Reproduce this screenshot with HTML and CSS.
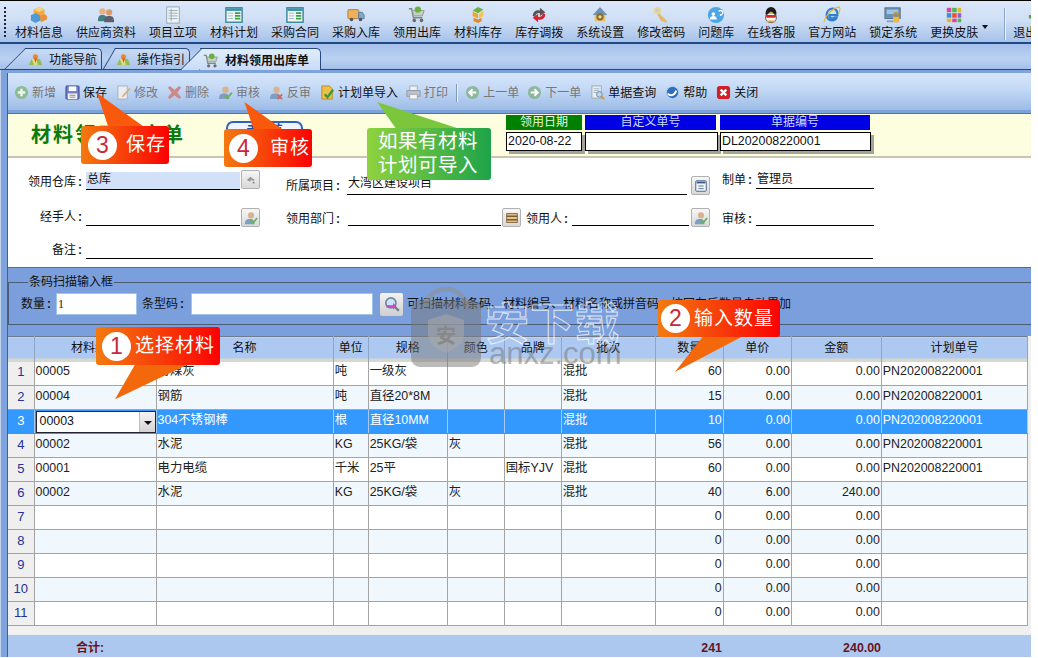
FILE: index.html
```html
<!DOCTYPE html>
<html lang="zh-CN">
<head>
<meta charset="utf-8">
<title>材料领用出库单</title>
<link rel="stylesheet" href="styles.css">
</head>
<body>
<svg class="defs" width="0" height="0" aria-hidden="true">
  <defs>
    <symbol id="i-box" viewBox="0 0 20 20"><path d="M10 1l6 3v5l-6 3-6-3V4z" fill="#f3a63c"/><path d="M10 1l6 3-6 3-6-3z" fill="#f9cf7f"/><path d="M1 10l6-2 5 3v5l-6 3-5-3z" fill="#4f9bd6"/><path d="M11 11l5-2 3 2v4l-7 3z" fill="#e9913a"/></symbol>
    <symbol id="i-people" viewBox="0 0 20 20"><circle cx="6" cy="6" r="3.5" fill="#e8b184"/><path d="M1 17c0-6 2-7 5-7s5 1 5 7z" fill="#3f7f86"/><circle cx="13.500" cy="7" r="3.500" fill="#d99a6c"/><path d="M8 18c0-6 2-7 5.500-7S19 12 19 18z" fill="#5d5d6e"/></symbol>
    <symbol id="i-list" viewBox="0 0 20 20"><rect x="3" y="1" width="14" height="18" fill="#eef2f4" stroke="#8da2ad"/><path d="M5 5h10M5 8h10M5 11h10M5 14h10M8 3v14" stroke="#93a8b3"/></symbol>
    <symbol id="i-plan" viewBox="0 0 20 20"><rect x="1" y="2" width="18" height="16" fill="#f3f8f6" stroke="#2f7f95" stroke-width="1.500"/><rect x="1.500" y="2.500" width="17" height="3" fill="#3d93aa"/><path d="M11 8h6M11 11h6M11 14h6" stroke="#3aa04a" stroke-width="2"/><path d="M3 8h6M3 11h6M3 14h6" stroke="#9fb5bd"/></symbol>
    <symbol id="i-truck" viewBox="0 0 20 20"><rect x="1" y="4" width="12" height="10" rx="1" fill="#eeb05d" stroke="#b47a33"/><path d="M13 7h4l2 3v4h-6z" fill="#7fa9c9" stroke="#557f9f"/><circle cx="5" cy="15" r="2" fill="#555"/><circle cx="15" cy="15" r="2" fill="#555"/></symbol>
    <symbol id="i-cart" viewBox="0 0 20 20"><path d="M1 3h3l2 10h10" fill="none" stroke="#7b8a80" stroke-width="1.500"/><path d="M5 5h13l-2 6H6z" fill="#c6cfc4" stroke="#8b9a8e"/><circle cx="11" cy="4" r="3.500" fill="#6cae3f"/><circle cx="7" cy="16" r="2" fill="#6b6b6b"/><circle cx="15" cy="16" r="2" fill="#6b6b6b"/></symbol>
    <symbol id="i-cubes" viewBox="0 0 20 20"><path d="M10 1l6 3-6 4-6-3z" fill="#69b342"/><path d="M4 6l6 3v5l-6-3z" fill="#f0a52f"/><path d="M16 5v6l-5 3V9z" fill="#f6c64b"/><path d="M5 13l5 2 4-2v4l-4 2-5-2z" fill="#e58a2c"/></symbol>
    <symbol id="i-swap" viewBox="0 0 20 20"><path d="M3 11a6 6 0 0 1 8-6V2l6 5-6 4V8a4 4 0 0 0-5 4z" fill="#555"/><path d="M17 9a6 6 0 0 1-8 6v3l-6-5 6-4v3a4 4 0 0 0 5-4z" fill="#d8232a"/></symbol>
    <symbol id="i-gear" viewBox="0 0 20 20"><path d="M10 1l8 9H2z" fill="#6f8fb3"/><path d="M4 10h12v7H4z" fill="#e3c26c"/><circle cx="10" cy="12" r="4" fill="#8c6a28"/><circle cx="10" cy="12" r="1.800" fill="#f2dc9b"/></symbol>
    <symbol id="i-key" viewBox="0 0 20 20"><circle cx="6" cy="5" r="4" fill="#eed18c"/><circle cx="6" cy="5" r="1.500" fill="#b5cce9"/><path d="M8 8l9 9-2 2-2-2-1 1-2-2-1-1-3-5z" fill="#e2bb68"/></symbol>
    <symbol id="i-q" viewBox="0 0 20 20"><circle cx="10" cy="10" r="9" fill="#4aa6e6"/><circle cx="7" cy="9" r="2" fill="#fff"/><path d="M3 15c0-3 2-4 4-4s4 1 4 4z" fill="#fff"/><path d="M13 6a2.500 2.500 0 1 1 2 4v1" fill="none" stroke="#fff" stroke-width="1.500"/></symbol>
    <symbol id="i-qq" viewBox="0 0 20 20"><ellipse cx="10" cy="8" rx="6" ry="7" fill="#1b1b1b"/><ellipse cx="10" cy="13" rx="6" ry="5.500" fill="#fff" stroke="#222" stroke-width=".8"/><path d="M4 10h12l-1 3H5z" fill="#d9281f"/><path d="M7 8l3-2 3 2-3 1z" fill="#f0b429"/><path d="M4 18l3-2h6l3 2z" fill="#f0a020"/></symbol>
    <symbol id="i-ie" viewBox="0 0 20 20"><path d="M15 13c-1 2-3 3-5 3-4 0-6-3-6-6 0-4 3-7 7-7 3 0 6 3 5 7H7c0 2 1 4 3 4 1 0 2-.5 3-1z" fill="none" stroke="#2f80cf" stroke-width="2.500"/><path d="M1 18C2 12 9 3 18 1c2 3 0 6-1 8" fill="none" stroke="#e5b52f" stroke-width="1.200"/></symbol>
    <symbol id="i-lock" viewBox="0 0 20 20"><rect x="1" y="2" width="17" height="12" fill="#6b8fb5" stroke="#516f90"/><rect x="3" y="4" width="13" height="5" fill="#9fc4e6"/><rect x="3" y="16" width="13" height="2" fill="#8d9fb0"/><path d="M11 12v-2a2.500 2.500 0 0 1 5 0v2" fill="none" stroke="#c98f22" stroke-width="1.500"/><rect x="10" y="12" width="7" height="6" fill="#f0b93a"/></symbol>
    <symbol id="i-skin" viewBox="0 0 20 20"><path d="M2 2h5v5H2z" fill="#d646a8"/><path d="M8 2h5v5H8z" fill="#50b848"/><path d="M14 2h4v5h-4z" fill="#e5b52f"/><path d="M2 8h5v5H2z" fill="#3d8fd6"/><path d="M8 8h5v5H8z" fill="#e2542f"/><path d="M14 8h4v5h-4z" fill="#9a58c8"/><path d="M2 14h5v4H2z" fill="#e5b52f"/><path d="M8 14h5v4H8z" fill="#d646a8"/><path d="M14 14h4v4h-4z" fill="#50b848"/></symbol>
    <symbol id="i-exit" viewBox="0 0 20 20"><rect x="9" y="1" width="9" height="18" fill="#5c5c46"/><path d="M1 10h7V7l5 5-5 5v-3H1z" fill="#56a33b"/></symbol>
    <symbol id="i-map" viewBox="0 0 20 20"><path d="M1 16l4-8h11l3 8z" fill="#8fbf57"/><path d="M5 8l3 8h5L11 8z" fill="#e8d77f"/><circle cx="10" cy="5" r="3.500" fill="#e58a2c"/><path d="M8 7l2 6 2-6z" fill="#d35f1e"/></symbol>

    <symbol id="s-plus" viewBox="0 0 16 16"><circle cx="8" cy="8" r="7" fill="#8dbb94"/><path d="M4 8h8M8 4v8" stroke="#eef6ee" stroke-width="2.500"/></symbol>
    <symbol id="s-save" viewBox="0 0 16 16"><rect x="1" y="1" width="14" height="14" rx="1" fill="#6e7fc8" stroke="#36478f"/><rect x="4" y="1.500" width="8" height="5" fill="#fff"/><rect x="3" y="9" width="10" height="6" fill="#f2f2f2"/><path d="M5 11h6M5 13h6" stroke="#888"/></symbol>
    <symbol id="s-edit" viewBox="0 0 16 16"><rect x="2" y="1" width="10" height="14" fill="#e9edf3" stroke="#a8afb8"/><path d="M7 11l7-8 1.500 1.500L8 12.500l-2 .5z" fill="#d5b27a"/></symbol>
    <symbol id="s-del" viewBox="0 0 16 16"><path d="M3 1l5 4 5-4 2 2-4 5 4 5-2 2-5-4-5 4-2-2 4-5-4-5z" fill="#c98a8a"/></symbol>
    <symbol id="s-audit" viewBox="0 0 16 16"><circle cx="8" cy="5" r="3.500" fill="#d8b392"/><path d="M1 15c0-5 2-6 6-6s5 2 5 6z" fill="#7d9fc5"/><path d="M7 11l3 3 5-6" fill="none" stroke="#6cb15c" stroke-width="2"/></symbol>
    <symbol id="s-unaudit" viewBox="0 0 16 16"><circle cx="8" cy="5" r="3.500" fill="#d8b392"/><path d="M1 15c0-5 2-6 6-6s5 2 5 6z" fill="#7d9fc5"/><path d="M9 10l5 5M14 10l-5 5" stroke="#c96a6a" stroke-width="2"/></symbol>
    <symbol id="s-import" viewBox="0 0 16 16"><path d="M2 1h8l3 3v11H2z" fill="#eec14c" stroke="#b48a22"/><path d="M5 10l3 3 6-8" fill="none" stroke="#3c9a35" stroke-width="2.500"/></symbol>
    <symbol id="s-print" viewBox="0 0 16 16"><rect x="4" y="1" width="8" height="5" fill="#eef0f3" stroke="#a5abb3"/><rect x="1" y="6" width="14" height="6" fill="#bcc3cc" stroke="#8f98a3"/><rect x="4" y="10" width="8" height="5" fill="#f4f5f7" stroke="#a5abb3"/></symbol>
    <symbol id="s-prev" viewBox="0 0 16 16"><circle cx="8" cy="8" r="7" fill="#8db8a0"/><path d="M12 8H6M8 4.500L4.500 8 8 11.500" fill="none" stroke="#fff" stroke-width="2"/></symbol>
    <symbol id="s-next" viewBox="0 0 16 16"><circle cx="8" cy="8" r="7" fill="#8db8a0"/><path d="M4 8h6M8 4.500L11.500 8 8 11.500" fill="none" stroke="#fff" stroke-width="2"/></symbol>
    <symbol id="s-query" viewBox="0 0 16 16"><rect x="2" y="1" width="10" height="13" fill="#e8edf2" stroke="#9aa8b5"/><path d="M4 4h6M4 6h6M4 8h4" stroke="#a9b7c4"/><circle cx="10" cy="10" r="3" fill="#bcd6ee" stroke="#6d89a3"/><path d="M12 12l3 3" stroke="#d3983a" stroke-width="2"/></symbol>
    <symbol id="s-help" viewBox="0 0 16 16"><circle cx="8" cy="8" r="6.500" fill="#2f6fc0" stroke="#b8cfe8"/><path d="M3 9c2 3 7 3 9-3" fill="none" stroke="#fff" stroke-width="2"/></symbol>
    <symbol id="s-close" viewBox="0 0 16 16"><rect x="1" y="1" width="14" height="14" rx="3" fill="#cf2027"/><path d="M5 5l6 6M11 5l-6 6" stroke="#fff" stroke-width="2.500"/></symbol>
    <symbol id="s-find" viewBox="0 0 16 16"><circle cx="7" cy="7" r="4.500" fill="#cfe3f5" stroke="#6a8aa8" stroke-width="1.500"/><path d="M10 10l4 4" stroke="#6a7a88" stroke-width="2"/><path d="M3 9h6v-2l3 3-3 3v-2H3z" fill="#c24bc4"/></symbol>
    <symbol id="s-back" viewBox="0 0 16 16"><path d="M3 8l5-4 1 2 3 1-1 2-3-1-1 2z" fill="#9a9a9a"/><rect x="10" y="10" width="2" height="2" fill="#8a8a8a"/></symbol>
    <symbol id="s-doc" viewBox="0 0 16 16"><rect x="2" y="2" width="12" height="12" rx="1" fill="#f2f6fa" stroke="#35597c"/><rect x="3" y="3" width="10" height="2" fill="#35597c"/><path d="M5 8h6M5 11h6" stroke="#47688a"/></symbol>
    <symbol id="s-abacus" viewBox="0 0 16 16"><rect x="2" y="3" width="12" height="10" fill="#e4c596" stroke="#7f5a2a"/><path d="M2 6h12M2 10h12" stroke="#7f5a2a" stroke-width="1.500"/></symbol>
  </defs>
</svg>

<div class="app">
  <nav class="topbar">
    <span class="grip"></span>
    <a class="ti"><svg class="ti-ic"><use href="#i-box"/></svg><span>材料信息</span></a>
    <a class="ti"><svg class="ti-ic"><use href="#i-people"/></svg><span>供应商资料</span></a>
    <a class="ti"><svg class="ti-ic"><use href="#i-list"/></svg><span>项目立项</span></a>
    <a class="ti"><svg class="ti-ic"><use href="#i-plan"/></svg><span>材料计划</span></a>
    <a class="ti"><svg class="ti-ic"><use href="#i-plan"/></svg><span>采购合同</span></a>
    <a class="ti"><svg class="ti-ic"><use href="#i-truck"/></svg><span>采购入库</span></a>
    <a class="ti"><svg class="ti-ic"><use href="#i-cart"/></svg><span>领用出库</span></a>
    <a class="ti"><svg class="ti-ic"><use href="#i-cubes"/></svg><span>材料库存</span></a>
    <a class="ti"><svg class="ti-ic"><use href="#i-swap"/></svg><span>库存调拨</span></a>
    <a class="ti"><svg class="ti-ic"><use href="#i-gear"/></svg><span>系统设置</span></a>
    <a class="ti"><svg class="ti-ic"><use href="#i-key"/></svg><span>修改密码</span></a>
    <a class="ti"><svg class="ti-ic"><use href="#i-q"/></svg><span>问题库</span></a>
    <a class="ti"><svg class="ti-ic"><use href="#i-qq"/></svg><span>在线客服</span></a>
    <a class="ti"><svg class="ti-ic"><use href="#i-ie"/></svg><span>官方网站</span></a>
    <a class="ti"><svg class="ti-ic"><use href="#i-lock"/></svg><span>锁定系统</span></a>
    <a class="ti"><svg class="ti-ic"><use href="#i-skin"/></svg><span>更换皮肤</span></a>
    <span class="caret"></span>
    <span class="vsep"></span>
    <a class="ti"><svg class="ti-ic"><use href="#i-exit"/></svg><span>退出系统</span></a>
  </nav>

  <div class="tabs">
    <div class="tab t1"><svg class="tab-ic"><use href="#i-map"/></svg><span>功能导航</span></div>
    <div class="tab t2"><svg class="tab-ic"><use href="#i-map"/></svg><span>操作指引</span></div>
    <div class="tab t3"><svg class="tab-ic"><use href="#i-cart"/></svg><span>材料领用出库单</span></div>
  </div>

  <main class="frame">
    <div class="actions">
      <a class="act off"><svg class="ic"><use href="#s-plus"/></svg>新增</a>
      <a class="act"><svg class="ic"><use href="#s-save"/></svg>保存</a>
      <a class="act off"><svg class="ic"><use href="#s-edit"/></svg>修改</a>
      <a class="act off"><svg class="ic"><use href="#s-del"/></svg>删除</a>
      <a class="act off"><svg class="ic"><use href="#s-audit"/></svg>审核</a>
      <a class="act off"><svg class="ic"><use href="#s-unaudit"/></svg>反审</a>
      <a class="act"><svg class="ic"><use href="#s-import"/></svg>计划单导入</a>
      <a class="act off act-print"><svg class="ic"><use href="#s-print"/></svg>打印</a>
      <span class="act-sep"></span>
      <a class="act off"><svg class="ic"><use href="#s-prev"/></svg>上一单</a>
      <a class="act off act-next"><svg class="ic"><use href="#s-next"/></svg>下一单</a>
      <a class="act"><svg class="ic"><use href="#s-query"/></svg>单据查询</a>
      <a class="act"><svg class="ic"><use href="#s-help"/></svg>帮助</a>
      <a class="act"><svg class="ic"><use href="#s-close"/></svg>关闭</a>
    </div>

    <header class="band">
      <h1 class="title">材料领用出库单</h1>
      <span class="status">未审核</span>
      <div class="meta m-date"><b class="meta-h green">领用日期</b><span class="meta-v">2020-08-22</span></div>
      <div class="meta m-custom"><b class="meta-h blue">自定义单号</b><span class="meta-v"></span></div>
      <div class="meta m-no"><b class="meta-h blue">单据编号</b><span class="meta-v">DL202008220001</span></div>
    </header>

    <section class="form">
      <label class="lb a1 top5">领用仓库<b>:</b></label>
      <div class="fd b1 top2 h17 tint">总库</div>
      <button class="fb c1 top0"><svg class="fb-ic"><use href="#s-back"/></svg></button>
      <label class="lb e1 top9">所属项目<b>:</b></label>
      <div class="fd f-proj top7 h17 project">大湾区建设项目</div>
      <button class="fb j1 top6"><svg class="fb-ic"><use href="#s-doc"/></svg></button>
      <label class="lb l1 top3">制单<b>:</b></label>
      <div class="fd m1 top2 h16">管理员</div>

      <label class="lb a1 top2">经手人<b>:</b></label>
      <div class="fd b1 h17"></div>
      <button class="fb c1"><svg class="fb-ic"><use href="#s-audit"/></svg></button>
      <label class="lb e1 top4">领用部门<b>:</b></label>
      <div class="fd f1 h17"></div>
      <button class="fb g1"><svg class="fb-ic"><use href="#s-abacus"/></svg></button>
      <label class="lb h1 top4">领用人<b>:</b></label>
      <div class="fd i1 h17"></div>
      <button class="fb j1"><svg class="fb-ic"><use href="#s-audit"/></svg></button>
      <label class="lb l1 top4">审核<b>:</b></label>
      <div class="fd m1 h17"></div>

      <label class="lb a1 top4">备注<b>:</b></label>
      <div class="fd f-note h15 top4"></div>
    </section>

    <section class="scan">
      <fieldset class="scan-box">
        <legend>条码扫描输入框</legend>
        <div class="scan-row">
          <label class="scan-l1">数量<b>:</b></label>
          <span class="inp inp-qty">1</span>
          <label class="scan-l2">条型码<b>:</b></label>
          <span class="inp inp-code"></span>
          <button class="find"><svg class="find-ic"><use href="#s-find"/></svg></button>
          <span class="hint">可扫描材料条码、材料编号、材料名称或拼音码，按回车后数量自动累加</span>
        </div>
      </fieldset>
    </section>

    <section class="grid">
      <table>
        <colgroup><col class="c-n"><col class="c-code"><col class="c-name"><col class="c-unit"><col class="c-spec"><col class="c-color"><col class="c-brand"><col class="c-batch"><col class="c-qty"><col class="c-price"><col class="c-amt"><col class="c-plan"></colgroup>
        <thead><tr><th></th><th>材料编号</th><th>名称</th><th>单位</th><th>规格</th><th>颜色</th><th>品牌</th><th>批次</th><th>数量</th><th>单价</th><th>金额</th><th>计划单号</th></tr></thead>
        <tbody>
          <tr><td class="n">1</td><td>00005</td><td>粉煤灰</td><td>吨</td><td>一级灰</td><td></td><td></td><td>混批</td><td class="r">60</td><td class="r">0.00</td><td class="r">0.00</td><td>PN202008220001</td></tr>
          <tr><td class="n">2</td><td>00004</td><td>钢筋</td><td>吨</td><td>直径20*8M</td><td></td><td></td><td>混批</td><td class="r">15</td><td class="r">0.00</td><td class="r">0.00</td><td>PN202008220001</td></tr>
          <tr class="sel"><td class="n">3</td><td class="editor"><span class="edit-box">00003<i class="edit-btn"></i></span></td><td>304不锈钢棒</td><td>根</td><td>直径10MM</td><td></td><td></td><td>混批</td><td class="r">10</td><td class="r">0.00</td><td class="r">0.00</td><td>PN202008220001</td></tr>
          <tr><td class="n">4</td><td>00002</td><td>水泥</td><td>KG</td><td>25KG/袋</td><td>灰</td><td></td><td>混批</td><td class="r">56</td><td class="r">0.00</td><td class="r">0.00</td><td>PN202008220001</td></tr>
          <tr><td class="n">5</td><td>00001</td><td>电力电缆</td><td>千米</td><td>25平</td><td></td><td>国标YJV</td><td>混批</td><td class="r">60</td><td class="r">0.00</td><td class="r">0.00</td><td>PN202008220001</td></tr>
          <tr><td class="n">6</td><td>00002</td><td>水泥</td><td>KG</td><td>25KG/袋</td><td>灰</td><td></td><td>混批</td><td class="r">40</td><td class="r">6.00</td><td class="r">240.00</td><td></td></tr>
          <tr><td class="n">7</td><td></td><td></td><td></td><td></td><td></td><td></td><td></td><td class="r">0</td><td class="r">0.00</td><td class="r">0.00</td><td></td></tr>
          <tr><td class="n">8</td><td></td><td></td><td></td><td></td><td></td><td></td><td></td><td class="r">0</td><td class="r">0.00</td><td class="r">0.00</td><td></td></tr>
          <tr><td class="n">9</td><td></td><td></td><td></td><td></td><td></td><td></td><td></td><td class="r">0</td><td class="r">0.00</td><td class="r">0.00</td><td></td></tr>
          <tr><td class="n">10</td><td></td><td></td><td></td><td></td><td></td><td></td><td></td><td class="r">0</td><td class="r">0.00</td><td class="r">0.00</td><td></td></tr>
          <tr><td class="n">11</td><td></td><td></td><td></td><td></td><td></td><td></td><td></td><td class="r">0</td><td class="r">0.00</td><td class="r">0.00</td><td></td></tr>
        </tbody>
      </table>
      <div class="grid-gap"></div>
      <div class="total">
        <b class="t-label">合计:</b>
        <b class="t-qty">241</b>
        <b class="t-amt">240.00</b>
      </div>
    </section>
  </main>

  <div class="wm" aria-hidden="true">
    <svg class="wm-lock" viewBox="0 0 70 80"><path d="M15 20a20 18 0 0 1 40 0" fill="none" stroke="#8e8e8e" stroke-opacity=".55" stroke-width="5"/><rect y="13" width="70" height="67" rx="9" fill="#777" fill-opacity=".5"/><path d="M35 27l18 6v14c0 10-9 15-18 19-9-4-18-9-18-19V33z" fill="#aaa" fill-opacity=".55"/><text x="35" y="56" text-anchor="middle" class="wm-an">安</text></svg>
    <span class="wm-t">安下载</span>
    <span class="wm-u">anxz.com</span>
  </div>

  <div class="co co3"><svg class="tail" viewBox="0 0 60 40"><polygon points="0,0 12,36 50,36" fill="#f9590c"/></svg><div class="co-b"><span class="num">3</span><span class="co-t">保存</span></div></div>
  <div class="co co4"><svg class="tail" viewBox="0 0 60 40"><polygon points="0,0 12,36 50,36" fill="#f9590c"/></svg><div class="co-b"><span class="num">4</span><span class="co-t">审核</span></div></div>
  <div class="co co1"><svg class="tail" viewBox="0 0 80 40"><polygon points="0,38 22,0 80,0" fill="#f4680c"/></svg><div class="co-b"><span class="num">1</span><span class="co-t">选择材料</span></div></div>
  <div class="co co2"><svg class="tail" viewBox="0 0 74 40"><polygon points="0,38 30,0 72,0" fill="#f4680c"/></svg><div class="co-b"><span class="num">2</span><span class="co-t">输入数量</span></div></div>
  <div class="co cog"><svg class="tail" viewBox="0 0 90 30"><polygon points="0,0 20,28 86,28" fill="#7cc63e"/></svg><div class="co-b">如果有材料<br>计划可导入</div></div>
</div>
</body>
</html>
```

FILE: styles.css
```css
* { box-sizing: border-box; }
html, body { margin: 0; padding: 0; background: #fff; }
body { font: 12px/14px "Liberation Sans", "Noto Sans CJK SC", sans-serif; color: #111; }
.defs { position: absolute; }
.app { position: relative; width: 1031px; height: 657px; overflow: hidden; }

/* top bar */
.topbar { display: flex; gap: 13px; height: 44px; padding: 5px 0 0 15px; border-top: 1px solid #000; border-bottom: 1px solid #24497f; position: relative; overflow: hidden; background: linear-gradient(#dbe7f8, #cfdff5 45%, #a4c1e9); box-shadow: inset 0 -1px #1f4a86; white-space: nowrap; }
.grip { position: absolute; left: 4px; top: 6px; width: 2px; height: 30px; background: repeating-linear-gradient(#223 0 2px, transparent 2px 4px); }
.ti { display: flex; flex-direction: column; align-items: center; flex: none; color: #111; }
.ti-ic { width: 18px; height: 18px; margin-bottom: 2px; }
.caret { width: 0; height: 0; margin: 19px 0 0 -9px; border: 3px solid transparent; border-top: 4px solid #111; flex: none; }
.vsep { width: 1px; height: 32px; margin: 2px -5px 0 3px; background: #8aa6cc; box-shadow: 1px 0 #e9f1fb; flex: none; }

/* tabs */
.tabs { display: flex; align-items: flex-end; height: 26px; background: linear-gradient(#a5c0ea, #bad1f1 60%, #a4c0ea); border-bottom: 1px solid #27497c; }
.tab { position: relative; height: 21px; padding-top: 2px; display: flex; align-items: center; gap: 6px; color: #111; border-top: 1px solid #27497c; border-right: 1px solid #27497c; border-radius: 0 5px 0 0; background: linear-gradient(#c9dbf5, #a9c4eb); flex: none; }
.tab::before { content: ""; position: absolute; top: -1px; bottom: 0; left: -10px; width: 20px; background: linear-gradient(#c9dbf5, #a9c4eb); border-left: 1px solid #27497c; border-top: 1px solid #27497c; transform: skewX(-45deg); z-index: 0; }
.tab > * { position: relative; z-index: 1; }
.tab-ic { width: 15px; height: 15px; flex: none; }
.t1 { width: 77px; margin-left: 25px; padding-left: 3px; }
.t2 { width: 75px; margin-left: 13px; padding-left: 1px; }
.t2::before { left: -6px; width: 12px; transform: skewX(-30deg); }
.t3 { width: 121px; height: 22px; margin: 0 0 -1px 10px; padding-left: 3px; font-weight: bold; background: linear-gradient(#e2edfb, #c8dcf6); }
.t3::before { background: linear-gradient(#e2edfb, #c8dcf6); left: -9px; width: 18px; }
.t3 .tab-ic { width: 16px; height: 16px; }

/* frame */
.frame { padding: 3px 0 0 8px; background: #7ea3dc; box-shadow: inset 1px 0 #c2d3ee; height: 587px; position: relative; }
.frame::before { content: ""; position: absolute; left: 7px; top: 3px; bottom: 0; width: 1px; background: #41618f; }
.actions { display: flex; align-items: center; height: 37px; padding: 2px 0 0 6px; gap: 9px; background: linear-gradient(#d6e5fa, #c6daf6 40%, #9dbce6); white-space: nowrap; }
.act { display: flex; align-items: center; gap: 3px; color: #111; }
.act.off { color: #777; }
.act-print { margin-left: -1px; }
.act-next { margin-left: -1px; }
.ic { width: 15px; height: 15px; flex: none; }
.act-sep { width: 1px; height: 18px; background: #7f98bf; box-shadow: 1px 0 #eef4fc; margin: 0 -1px 0 -1px; }

.band { display: flex; align-items: flex-start; height: 45px; margin-top: 3px; padding-left: 23px; background: #fdfde0; border-top: 1px solid #54719c; border-bottom: 2px solid #c7c7b1; position: relative; }
.title { margin: 8px 0 0; width: 195px; font-size: 20px; line-height: 26px; letter-spacing: 2px; font-weight: bold; color: #0d7a0d; flex: none; }
.status { width: 77px; height: 20px; margin: 7px 203px 0 0; border: 2px solid #2c62c4; border-radius: 7px; background: #eef3fd; color: #1c4ab0; text-align: center; line-height: 14px; font-weight: bold; flex: none; }
.meta { flex: none; margin-top: 1px; }
.meta-h { display: block; height: 15px; line-height: 15px; text-align: center; font-weight: normal; color: #eaf2ff; }
.green { background: #008000; color: #e9f5df; }
.blue { background: #0000e4; color: #cfd8ff; }
.meta-v { display: block; height: 19px; margin-top: 2px; padding-left: 1px; background: #fff; border: 1px solid #000; line-height: 17px; font-size: 12.4px; box-shadow: 3px 3px 0 #a4a49c; }
.m-date { width: 76px; margin-right: 3px; }
.m-custom { width: 133px; margin-right: 2px; }
.m-no { width: 151px; }
.m-custom .meta-h { width: 131px; }
.m-no .meta-h { width: 150px; }

/* form */
.form { display: grid; height: 110px; padding-top: 12px; background: #fff; grid-template-columns: 74px 158px 21px 25px 54px 161px 21px 46px 121px 22px 11px 30px 122px 1fr; grid-template-rows: 26px 19px 20px; row-gap: 12px; align-content: start; border-bottom: 1px solid #4f6e9c; }
.form > * { align-self: start; }
.lb { text-align: right; white-space: nowrap; }
.lb b { margin-left: 2px; }
.a1 { grid-column: 1; }
.b1 { grid-column: 2; margin-left: 4px; }
.c1 { grid-column: 3; margin-left: 1px; }
.e1 { grid-column: 5; }
.f1 { grid-column: 6; margin-left: 8px; }
.f-proj { grid-column: 6 / 10; margin-left: 7px; margin-right: 2px; }
.f-note { grid-column: 2 / 14; margin-left: 4px; margin-right: 1px; }
.g1 { grid-column: 7; margin-left: 1px; }
.h1 { grid-column: 8; }
.i1 { grid-column: 9; margin-left: 4px; }
.j1 { grid-column: 10; margin-left: 2px; }
.l1 { grid-column: 12; text-align: left; }
.m1 { grid-column: 13; margin-left: 4px; }
.top0 { margin-top: 0; }
.top2 { margin-top: 2px; }
.top3 { margin-top: 3px; }
.top4 { margin-top: 4px; }
.top5 { margin-top: 5px; }
.top6 { margin-top: 6px; }
.top7 { margin-top: 7px; }
.top9 { margin-top: 9px; }
.fd { border-bottom: 1px solid #000; padding-left: 1px; white-space: nowrap; }
.h15 { height: 16px; }
.h16 { height: 17px; }
.h17 { height: 18px; }
.tint { background: #d2e0f8; }
.project { line-height: 12px; }
.fb { width: 19px; height: 19px; padding: 0; border: 1px solid #b1b1b1; border-radius: 2px; background: linear-gradient(#f6f6f6, #d9d9d9); display: flex; align-items: center; justify-content: center; }
.fb-ic { width: 14px; height: 14px; }

/* scan */
.scan { height: 68px; padding-top: 7px; background: #7a9fdc; }
.scan-box { margin: 0; padding: 4px 0 8px 12px; border: 1px solid #4c5d78; border-right: 0; height: 50px; min-width: 0; }
.scan-box legend { padding: 0 1px; margin-left: 7px; line-height: 14px; }
.scan-row { display: flex; align-items: center; height: 22px; white-space: nowrap; }
.scan-row b { margin-left: 2px; }
.scan-l1 { width: 35px; flex: none; }
.inp { flex: none; display: block; height: 22px; background: #fff; border: 1px solid #9fc4e6; line-height: 20px; padding-left: 1px; font-family: "Liberation Serif", serif; }
.inp-qty { width: 81px; }
.scan-l2 { margin-left: 5px; width: 49px; flex: none; }
.inp-code { width: 182px; }
.find { width: 23px; height: 23px; margin-left: 7px; padding: 0; border: 0; border-radius: 2px; background: linear-gradient(#f3f3f3, #cfcfcf); display: flex; align-items: center; justify-content: center; flex: none; }
.find-ic { width: 18px; height: 18px; }
.hint { margin-left: 4px; }

/* grid */
.grid { background: #f0f0f0; }
table { border-collapse: collapse; table-layout: fixed; width: 1020px; font-size: 12.4px; }
.c-n { width: 26px; }
.c-code { width: 122px; }
.c-name { width: 177px; }
.c-unit { width: 35px; }
.c-spec { width: 79px; }
.c-color { width: 57px; }
.c-brand { width: 57px; }
.c-batch { width: 94px; }
.c-qty { width: 68px; }
.c-price { width: 68px; }
.c-amt { width: 90px; }
.c-plan { width: 146px; }
thead tr { height: 25px; }
th { padding: 0 0 2px; font-size: 12px; font-weight: normal; text-align: center; border-top: 1px solid #6f7c8f; border-right: 1px solid #8fa5c3; background: linear-gradient(#adc9f2 0 21px, #d8d7cb 21px); }
tbody tr { height: 24px; background: #fff; }
tbody tr:nth-child(even) { background: #f0f7fd; }
td { padding: 0 1px 3px; border-right: 1px solid #a4a4a4; border-bottom: 1px solid #a4a4a4; line-height: 19px; white-space: nowrap; overflow: hidden; color: #222; }
td.n { text-align: center; background: #efefef; color: #25309c; font-size: 13px; }
td.r { text-align: right; }
tr.sel, tr.sel:nth-child(even) { background: #3399ff; }
tr.sel td { color: #fff; border-bottom-color: #3399ff; border-right-color: #a8c9ec; }
tr.sel td.n { background: #3399ff; color: #fff; }
td.editor { padding: 1px 0 0 1px; }
.edit-box { display: flex; justify-content: space-between; height: 22px; width: 120px; padding-left: 3px; border: 1px solid #223; background: #fff; color: #111; line-height: 19px; position: relative; }
.edit-btn { display: block; width: 16px; background: linear-gradient(#f4f4f4, #d3d3d3) ; position: relative; border-left: 1px solid #bbb; }
.edit-btn::after { content: ""; position: absolute; left: 4px; top: 9px; border: 4px solid transparent; border-top: 4px solid #111; border-bottom: 0; }
.grid-gap { height: 9px; }
.total { display: flex; height: 22px; padding-top: 3px; align-items: center; background: #adc8ee; color: #6a1222; font-size: 12.4px; }
.t-label { margin-left: 68px; width: 32px; flex: none; font-size: 12px; }
.t-qty { width: 614px; text-align: right; flex: none; }
.t-amt { width: 159px; text-align: right; flex: none; }

/* watermark */
.wm { position: absolute; left: 411px; top: 287px; width: 225px; height: 85px; }
.wm-lock { position: absolute; left: 0; top: 0; width: 70px; height: 80px; }
.wm-an { font: bold 20px "Noto Sans CJK SC", sans-serif; fill: #888; }
.wm-t { position: absolute; left: 74px; top: 12px; font-size: 44px; line-height: 44px; font-weight: bold; letter-spacing: 1px; color: transparent; -webkit-text-stroke: 1px rgba(255,255,255,.75); font-family: "Noto Sans CJK SC", sans-serif; white-space: nowrap; }
.wm-u { position: absolute; left: 78px; top: 51px; font-size: 31px; line-height: 32px; color: rgba(110,115,125,.5); white-space: nowrap; }

/* callouts */
.co { position: absolute; color: #fff; }
.co-b { position: absolute; display: flex; align-items: center; border-radius: 3px; background: linear-gradient(90deg, #f37a10, #fb0202); height: 100%; width: 100%; left: 0; top: 0; font-size: 19px; letter-spacing: 1px; white-space: nowrap; }
.num { width: 29px; height: 29px; flex: none; border-radius: 50%; background: #fff; color: #c9283a; text-align: center; font-size: 23px; line-height: 29px; letter-spacing: 0; font-family: "Liberation Sans", sans-serif; }
.tail { position: absolute; overflow: visible; }
.co3 { left: 81px; top: 126px; width: 88px; height: 38px; }
.co3 .tail { left: 16px; top: -33px; width: 60px; height: 40px; }
.co3 .num { margin: 0 9px 0 7px; }
.co4 { left: 224px; top: 129px; width: 88px; height: 38px; }
.co4 .tail { left: 16px; top: -27px; width: 60px; height: 34px; }
.co4 .num { margin: 0 12px 0 5px; }
.co1 { left: 96px; top: 327px; width: 124px; height: 38px; }
.co1 .tail { left: 16px; top: 37px; width: 80px; height: 37px; }
.co1 .num { margin: 0 4px 0 6px; }
.co2 { left: 658px; top: 300px; width: 122px; height: 37px; }
.co2 .tail { left: 15px; top: 36px; width: 74px; height: 38px; }
.co2 .num { margin: 0 4px 0 3px; }
.cog { left: 367px; top: 128px; width: 124px; height: 52px; }
.cog .tail { left: 10px; top: -26px; width: 90px; height: 30px; }
.cog .co-b { display: block; padding: 1px 0 0 11px; background: linear-gradient(90deg, #8fd23e, #1ea34a); font-size: 19.500px; line-height: 24px; letter-spacing: .5px; }
```
